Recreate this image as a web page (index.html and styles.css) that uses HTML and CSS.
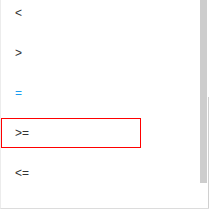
FILE: index.html
```html
<!DOCTYPE html>
<html lang="en">
<head>
    <meta charset="UTF-8">
    <title>Operators</title>
    <link rel="stylesheet" href="styles.css">
</head>
<body>
    <div class="panel">
        <ul class="options">
            <li class="option">&lt;</li>
            <li class="option">&gt;</li>
            <li class="option active">=</li>
            <li class="option focused">&gt;=</li>
            <li class="option">&lt;=</li>
        </ul>
        <div class="scrollbar">
            <div class="thumb"></div>
        </div>
        <div class="edge"></div>
    </div>
</body>
</html>
```
FILE: styles.css
```css
body {
    margin: 0;
    background-color: #fff;
    font-family: Arial, "Liberation Sans", sans-serif;
}
.panel {
    display: flex;
    width: 209px;
    height: 209px;
    box-sizing: border-box;
    border-left: 1px solid #ececec;
    border-bottom: 1px solid #dcdcdc;
    overflow: hidden;
}
.options {
    flex: 1;
    list-style: none;
    margin: -2px 0 0 0;
    padding: 0;
}
.option {
    height: 30px;
    line-height: 30px;
    margin-bottom: 10px;
    padding-left: 14px;
    width: 140px;
    box-sizing: border-box;
    font-size: 12px;
    color: #333;
}
.option.active {
    color: #1a9df0;
}
.option.focused {
    border: 1px solid #f00;
    padding-left: 13px;
    line-height: 28px;
}
.scrollbar {
    width: 7px;
}
.thumb {
    height: 183px;
    background-color: #cdcdcd;
}
.edge {
    width: 2px;
    box-sizing: border-box;
    margin-top: 97px;
    border-right: 1px solid #d0d0d0;
}
```
